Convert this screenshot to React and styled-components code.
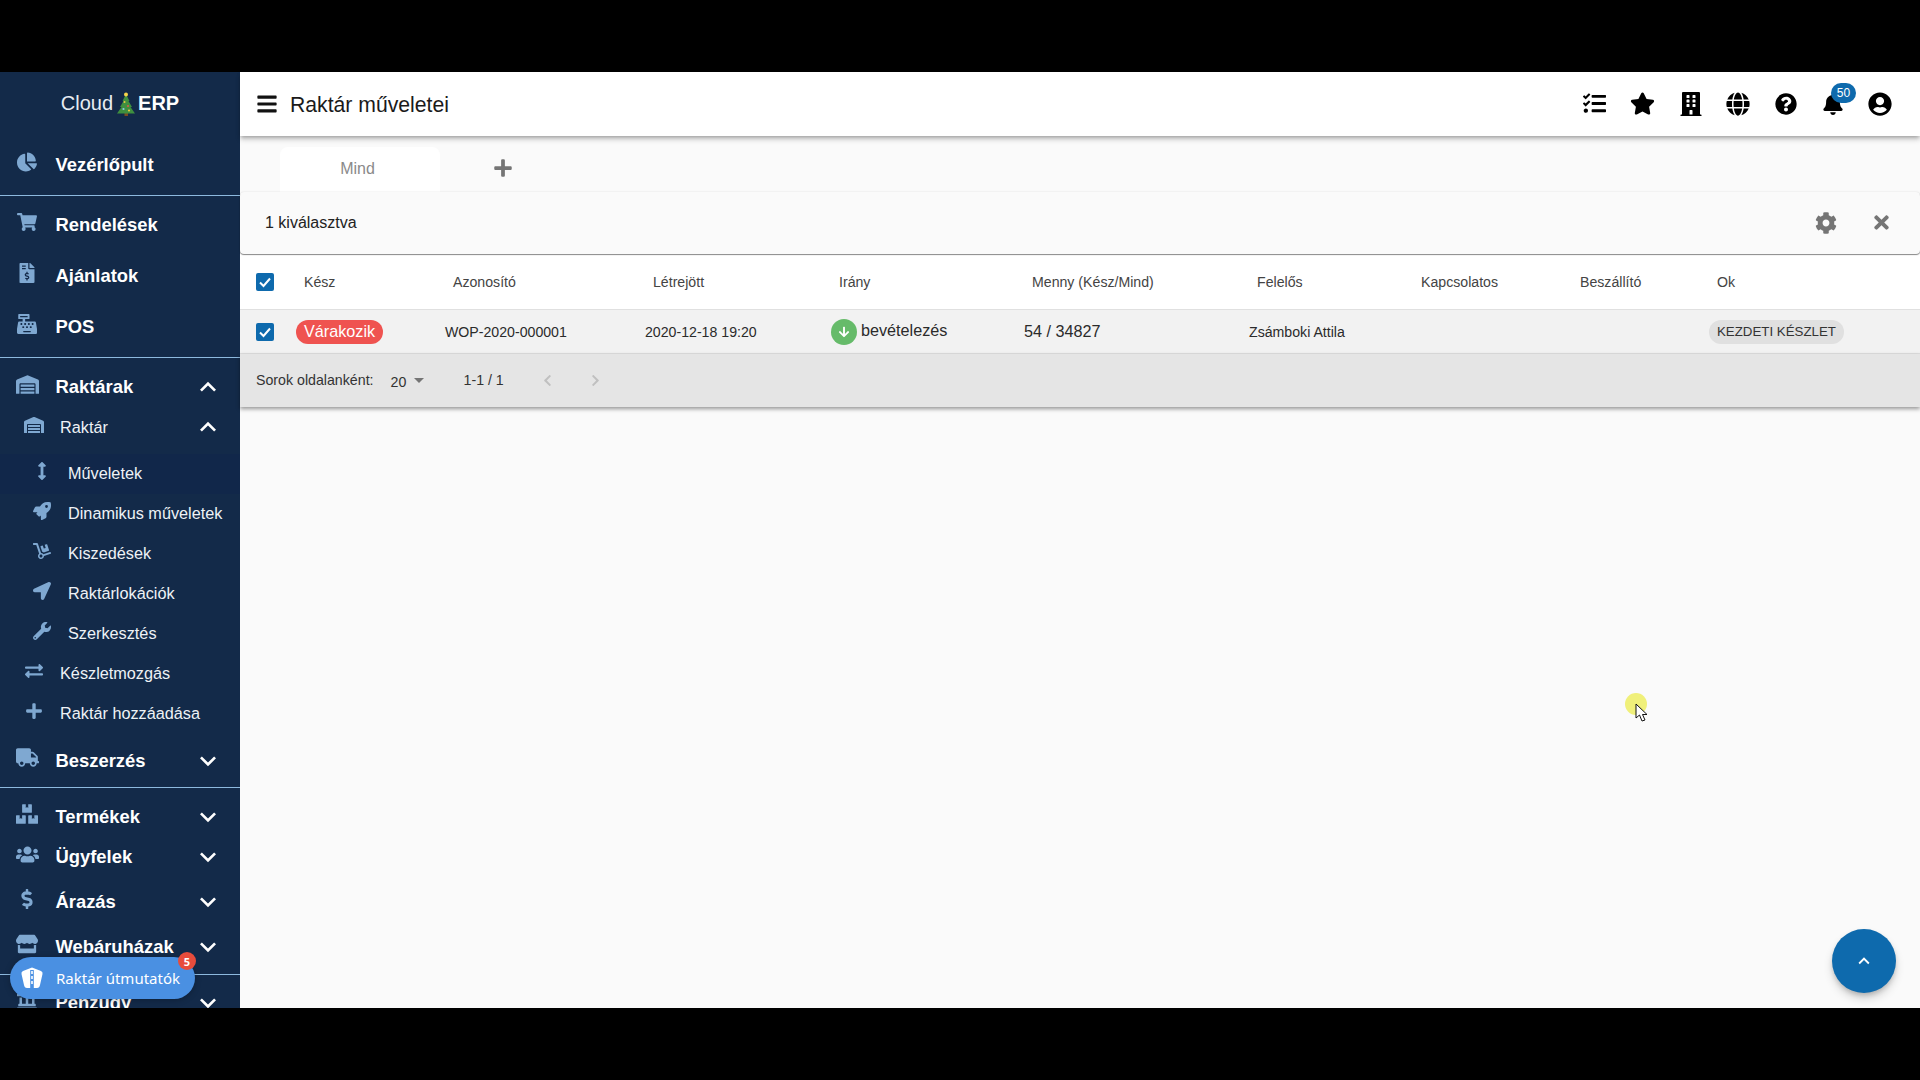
import React from "react";
import styled, { createGlobalStyle } from "styled-components";
import {
  FaChartPie, FaShoppingCart, FaFileInvoiceDollar, FaCashRegister, FaWarehouse,
  FaArrowsAltV, FaRocket, FaDolly, FaLocationArrow, FaWrench, FaExchangeAlt, FaPlus,
  FaTruck, FaBoxes, FaUsers, FaDollarSign, FaStore, FaLandmark, FaTasks, FaStar,
  FaBuilding, FaGlobe, FaQuestionCircle, FaBell, FaUserCircle, FaBars, FaCog, FaTimes,
  FaArrowDown, FaChevronLeft, FaChevronRight,
} from "react-icons/fa";
import { MdExpandLess, MdExpandMore, MdArrowDropDown } from "react-icons/md";

const Global = createGlobalStyle`
  html, body { margin: 0; padding: 0; background: #000; overflow: hidden; }
  * { box-sizing: border-box; }
  body { font-family: "Liberation Sans", Arial, sans-serif; }
`;

const Page = styled.div`
  width: 1920px;
  height: 1080px;
  padding-top: 72px;
  background: #000;
`;
const Frame = styled.div`
  position: relative;
  display: flex;
  width: 1920px;
  height: 936px;
  overflow: hidden;
  background: #fafafa;
`;
const Side = styled.nav`
  flex: 0 0 240px;
  height: 936px;
  overflow: hidden;
  background: #132a49;
  color: #fff;
`;
const Logo = styled.div`
  height: 63px;
  display: flex;
  align-items: center;
  justify-content: center;
  font-size: 20px;
  color: #e8edf3;
  b { color: #fff; }
  svg { margin: 0 2px 0 3px; }
`;
const Divider = styled.div`
  height: 1px;
  background: #8db9de;
  margin-top: ${(p) => p.$mt || 0}px;
`;
const Row = styled.div`
  display: flex;
  align-items: center;
  height: ${(p) => p.$h}px;
  margin-top: ${(p) => p.$mt || 0}px;
  padding-bottom: ${(p) => (p.$level === 0 ? 0 : 2)}px;
  background: ${(p) => (p.$active ? "#11274a" : "transparent")};
  font-size: ${(p) => (p.$level === 0 ? 18.4 : 16.25)}px;
  font-weight: ${(p) => (p.$level === 0 ? 700 : 400)};
  color: ${(p) => (p.$level === 0 ? "#fff" : "#eef2f6")};
  white-space: nowrap;
`;
const RowIcon = styled.span`
  flex: 0 0 auto;
  display: flex;
  align-items: center;
  justify-content: center;
  width: 24px;
  height: 24px;
  margin-left: ${(p) => [15, 22, 30][p.$level]}px;
  margin-right: ${(p) => [16.5, 14, 14][p.$level]}px;
  transform: translateY(${(p) => (p.$level === 0 ? -3 : -2)}px);
  color: #7fa8d1;
  font-size: ${(p) => p.$size || (p.$level === 0 ? 20 : 18)}px;
`;
const RowLabel = styled.span`
  flex: 1 1 auto;
`;
const Chevron = styled.span`
  flex: 0 0 auto;
  display: flex;
  width: 32px;
  margin-right: 16px;
  justify-content: center;
  font-size: 32px;
  color: #fff;
`;
const Main = styled.main`
  flex: 1 1 auto;
  min-width: 0;
  display: flex;
  flex-direction: column;
`;
const TopBar = styled.header`
  position: relative;
  height: 64px;
  flex: 0 0 64px;
  display: flex;
  align-items: center;
  padding: 0 16px 1px 16px;
  background: #fff;
  box-shadow: 0 2px 4px -1px rgba(0,0,0,.3), 0 4px 5px 0 rgba(0,0,0,.14);
`;
const Menu = styled.span`
  display: flex;
  font-size: 22px;
  color: #111;
  margin-right: 12px;
`;
const Title = styled.h1`
  flex: 1 1 auto;
  margin: 2px 0 0;
  font-size: 21.2px;
  font-weight: 400;
  color: #1a1a1a;
`;
const TopIcon = styled.span`
  position: relative;
  width: 47.5px;
  height: 40px;
  display: flex;
  align-items: center;
  justify-content: center;
  font-size: ${(p) => p.$size}px;
  color: #000;
  transform: translateX(${(p) => p.$dx || 0}px);
`;
const Badge = styled.span`
  position: absolute;
  top: -1px;
  left: 22px;
  width: 25px;
  height: 20px;
  border-radius: 10px;
  background: #0e6aad;
  color: #fff;
  font-size: 12px;
  display: flex;
  align-items: center;
  justify-content: center;
`;
const Tabs = styled.div`
  flex: 0 0 56px;
  display: flex;
  align-items: flex-end;
  padding-left: 40px;
`;
const Tab = styled.div`
  width: 160px;
  height: 45px;
  display: flex;
  align-items: center;
  justify-content: center;
  padding: 0 5px 1px 0;
  background: #fff;
  border-radius: 8px 8px 0 0;
  font-size: 16px;
  color: #8a8a8a;
`;
const AddTab = styled.div`
  width: 126px;
  height: 45px;
  display: flex;
  align-items: center;
  justify-content: center;
  padding-bottom: 3px;
  font-size: 20px;
  color: #757575;
`;
const SelectBar = styled.div`
  position: relative;
  z-index: 1;
  flex: 0 0 62px;
  display: flex;
  align-items: center;
  padding: 0 28px 1px 25px;
  background: #fafafa;
  border-radius: 4px;
  box-shadow: 0 1px 1px rgba(0,0,0,.45), 0 0 2px rgba(0,0,0,.12);
  font-size: 16px;
  color: #222;
`;
const SelectText = styled.span`
  flex: 1 1 auto;
`;
const BarIcon = styled.span`
  display: flex;
  margin-left: ${(p) => p.$ml}px;
  font-size: ${(p) => p.$size}px;
  color: #757575;
`;
const Grid = styled.div`
  display: grid;
  grid-template-columns: 56px 149px 200px 186px 193px 225px 164px 159px 137px 1fr;
  align-items: center;
  height: ${(p) => p.$h}px;
  flex: 0 0 ${(p) => p.$h}px;
  background: ${(p) => p.$bg};
  border-bottom: 1px solid #e0e0e0;
`;
const Head = styled.div`
  padding-left: 8px;
  font-size: 14.15px;
  color: #444;
  white-space: nowrap;
`;
const Cell = styled.div`
  display: flex;
  align-items: center;
  font-size: ${(p) => p.$size || 14.15}px;
  color: #2b2b2b;
  white-space: nowrap;
`;
const DirText = styled.span`
  margin-top: -2px;
`;
const Check = styled.span`
  display: flex;
  margin-left: 16px;
  width: 18px;
  height: 18px;
  border-radius: 2px;
  background: #0e6aad;
  align-items: center;
  justify-content: center;
`;
const Chip = styled.span`
  display: inline-flex;
  align-items: center;
  height: 24px;
  padding: 0 ${(p) => p.$pad}px;
  border-radius: 12px;
  background: ${(p) => p.$bg};
  color: ${(p) => p.$fg};
  font-size: ${(p) => p.$size}px;
`;
const DirIcon = styled.span`
  display: flex;
  align-items: center;
  justify-content: center;
  width: 26px;
  height: 26px;
  border-radius: 50%;
  background: #66bb6a;
  color: #fff;
  font-size: 12px;
  margin-right: 4px;
`;
const Footer = styled.div`
  flex: 0 0 53px;
  height: 53px;
  display: flex;
  align-items: center;
  padding-left: 16px;
  padding-bottom: 1px;
  background: #e5e5e5;
  font-size: 14.2px;
  color: #333;
  box-shadow: 0 2px 4px rgba(0,0,0,.4);
`;
const PerPage = styled.span`
  display: flex;
  align-items: center;
  margin-left: 17px;
  width: 73px;
  padding-top: 3px;
  svg { margin: -3px 0 0 1px; color: #757575; }
`;
const Range = styled.span`
  width: 77px;
`;
const Pager = styled.span`
  display: flex;
  width: 48px;
  color: #c0c0c0;
  font-size: 13px;
`;
const GuideButton = styled.div`
  position: absolute;
  left: 10px;
  top: 885px;
  width: 185px;
  height: 42px;
  border-radius: 21px;
  display: flex;
  align-items: center;
  padding-left: 10px;
  background: #4a90e2;
  color: #fff;
  font-family: "Noto Sans", sans-serif;
  font-size: 15px;
  box-shadow: 0 1px 6px rgba(0,0,0,.25);
`;
const GuideLabel = styled.span`
  margin-left: 12px;
`;
const GuideBadge = styled.span`
  position: absolute;
  right: -1px;
  top: -5px;
  width: 18px;
  height: 18px;
  border-radius: 50%;
  background: #e74c3c;
  color: #fff;
  font-size: 11px;
  font-weight: 700;
  display: flex;
  align-items: center;
  justify-content: center;
`;
const Fab = styled.div`
  position: absolute;
  left: 1832px;
  top: 857px;
  width: 64px;
  height: 64px;
  border-radius: 50%;
  display: flex;
  align-items: center;
  justify-content: center;
  background: #0e6aad;
  color: #fff;
  font-size: 22px;
  box-shadow: 0 3px 5px -1px rgba(0,0,0,.2), 0 6px 10px rgba(0,0,0,.14);
`;
const Cursor = styled.div`
  position: absolute;
  left: 1625px;
  top: 621px;
  width: 24px;
  height: 32px;
`;
const Halo = styled.span`
  position: absolute;
  left: 0;
  top: 0;
  width: 22px;
  height: 22px;
  border-radius: 50%;
  background: #f0f07a;
`;
const Pointer = styled.svg`
  position: absolute;
  left: 10px;
  top: 10px;
`;

const Tree = () => (
  <svg width="20" height="24" viewBox="0 0 19 24">
    <rect x="8" y="20" width="3.5" height="4" fill="#7a4a20" />
    <path d="M9.5 2 L13 9 L12 9 L15.5 15 L14 15 L18.5 21.5 H.5 L5 15 H3.5 L7 9 H6 Z" fill="#3f8f3f" />
    <circle cx="9.5" cy="2.5" r="2" fill="#f6d54a" />
    <circle cx="8" cy="10" r="1" fill="#e9c93f" />
    <circle cx="11.5" cy="14" r="1" fill="#e4574a" />
    <circle cx="7" cy="17" r="1.1" fill="#8ec7ea" />
    <circle cx="12.5" cy="18.5" r="1.1" fill="#e9c93f" />
  </svg>
);

const GuideIcon = () => (
  <svg width="24" height="24" viewBox="0 0 24 24">
    <path d="M12 1.5 L21 5 Q23 6 22.5 8 L20 19 Q19.5 22 17 22 H7 Q4.500 22 4 19 L1.500 8 Q1 6 3 5 Z" fill="#fff" />
    <rect x="10.200" y="4" width="3.600" height="18" fill="#4a90e2" />
    <path d="M12 5 V8 M12 10 V13 M12 15 V18" stroke="#fff" strokeWidth="1.6" />
  </svg>
);

const Tick = () => (
  <svg width="14" height="14" viewBox="0 0 14 14">
    <polyline points="2,7.500 5.500,11 12,3.500" fill="none" stroke="#fff" strokeWidth="2" />
  </svg>
);

const nav = [
  { label: "Vezérlőpult", Icon: FaChartPie, level: 0, h: 60 },
  { divider: true },
  { label: "Rendelések", Icon: FaShoppingCart, level: 0, h: 50, mt: 4 },
  { label: "Ajánlatok", Icon: FaFileInvoiceDollar, level: 0, h: 50, mt: 1 },
  { label: "POS", Icon: FaCashRegister, level: 0, h: 50, mt: 1 },
  { divider: true, mt: 5 },
  { label: "Raktárak", Icon: FaWarehouse, level: 0, size: 23, h: 42, mt: 8, arrow: "up" },
  { label: "Raktár", Icon: FaWarehouse, level: 1, size: 20, h: 40, arrow: "up" },
  { label: "Műveletek", Icon: FaArrowsAltV, level: 2, h: 40, mt: 6, active: true },
  { label: "Dinamikus műveletek", Icon: FaRocket, level: 2, h: 40 },
  { label: "Kiszedések", Icon: FaDolly, level: 2, h: 40 },
  { label: "Raktárlokációk", Icon: FaLocationArrow, level: 2, h: 40 },
  { label: "Szerkesztés", Icon: FaWrench, level: 2, h: 40 },
  { label: "Készletmozgás", Icon: FaExchangeAlt, level: 1, h: 40 },
  { label: "Raktár hozzáadása", Icon: FaPlus, level: 1, h: 40 },
  { label: "Beszerzés", Icon: FaTruck, level: 0, size: 23, h: 53, arrow: "down" },
  { divider: true },
  { label: "Termékek", Icon: FaBoxes, level: 0, size: 22, h: 40, mt: 9, arrow: "down" },
  { label: "Ügyfelek", Icon: FaUsers, level: 0, size: 23, h: 40, mt: 0, arrow: "down" },
  { label: "Árazás", Icon: FaDollarSign, level: 0, h: 40, mt: 5, arrow: "down" },
  { label: "Webáruházak", Icon: FaStore, level: 0, size: 22, h: 40, mt: 5, arrow: "down" },
  { divider: true, mt: 7 },
  { label: "Pénzügy", Icon: FaLandmark, level: 0, h: 56, arrow: "down" },
];

const heads = ["Kész", "Azonosító", "Létrejött", "Irány", "Menny (Kész/Mind)", "Felelős", "Kapcsolatos", "Beszállító", "Ok"];

const topIcons = [
  { Icon: FaTasks, size: 23, dx: -1 },
  { Icon: FaStar, size: 25 },
  { Icon: FaBuilding, size: 24, dx: 1 },
  { Icon: FaGlobe, size: 24 },
  { Icon: FaQuestionCircle, size: 22, dx: 1 },
  { Icon: FaBell, size: 22, badge: "50" },
  { Icon: FaUserCircle, size: 24 },
];

export default function App() {
  return (
    <Page>
      <Global />
      <Frame>
        <Side>
          <Logo>Cloud<Tree /><b>ERP</b></Logo>
          {nav.map((n, i) =>
            n.divider ? (
              <Divider key={i} $mt={n.mt} />
            ) : (
              <Row key={n.label} $h={n.h} $mt={n.mt} $level={n.level} $active={n.active}>
                <RowIcon $level={n.level} $size={n.size}><n.Icon /></RowIcon>
                <RowLabel>{n.label}</RowLabel>
                {n.arrow && (
                  <Chevron>{n.arrow === "up" ? <MdExpandLess /> : <MdExpandMore />}</Chevron>
                )}
              </Row>
            )
          )}
        </Side>
        <Main>
          <TopBar>
            <Menu><FaBars /></Menu>
            <Title>Raktár műveletei</Title>
            {topIcons.map(({ Icon, size, badge, dx }, i) => (
              <TopIcon key={i} $size={size} $dx={dx}>
                <Icon />
                {badge && <Badge>{badge}</Badge>}
              </TopIcon>
            ))}
          </TopBar>
          <Tabs>
            <Tab>Mind</Tab>
            <AddTab><FaPlus /></AddTab>
          </Tabs>
          <SelectBar>
            <SelectText>1 kiválasztva</SelectText>
            <BarIcon $size={22}><FaCog /></BarIcon>
            <BarIcon $size={21} $ml={34}><FaTimes /></BarIcon>
          </SelectBar>
          <Grid $h={56} $bg="#fff">
            <Check><Tick /></Check>
            {heads.map((h) => <Head key={h}>{h}</Head>)}
          </Grid>
          <Grid $h={44} $bg="#f2f2f2">
            <Check><Tick /></Check>
            <Cell><Chip $bg="#ef5350" $fg="#fff" $size={16.2} $pad={8}>Várakozik</Chip></Cell>
            <Cell>WOP-2020-000001</Cell>
            <Cell>2020-12-18 19:20</Cell>
            <Cell $size={16.2}><DirIcon><FaArrowDown /></DirIcon><DirText>bevételezés</DirText></Cell>
            <Cell $size={16.2}>54 / 34827</Cell>
            <Cell>Zsámboki Attila</Cell>
            <Cell />
            <Cell />
            <Cell><Chip $bg="#e0e0e0" $fg="#333" $size={13.3} $pad={8}>KEZDETI KÉSZLET</Chip></Cell>
          </Grid>
          <Footer>
            <span>Sorok oldalanként:</span>
            <PerPage>20<MdArrowDropDown size={24} /></PerPage>
            <Range>1-1 / 1</Range>
            <Pager><FaChevronLeft /></Pager>
            <Pager><FaChevronRight /></Pager>
          </Footer>
        </Main>
        <GuideButton>
          <GuideIcon />
          <GuideLabel>Raktár útmutatók</GuideLabel>
          <GuideBadge>5</GuideBadge>
        </GuideButton>
        <Fab><MdExpandLess /></Fab>
        <Cursor>
          <Halo />
          <Pointer width="14" height="20" viewBox="0 0 14 20">
            <path d="M1 1 V15 L4.500 12 L7 18 L10 17 L7.500 11.500 H12 Z" fill="#fff" stroke="#111" strokeWidth="1" />
          </Pointer>
        </Cursor>
      </Frame>
    </Page>
  );
}
